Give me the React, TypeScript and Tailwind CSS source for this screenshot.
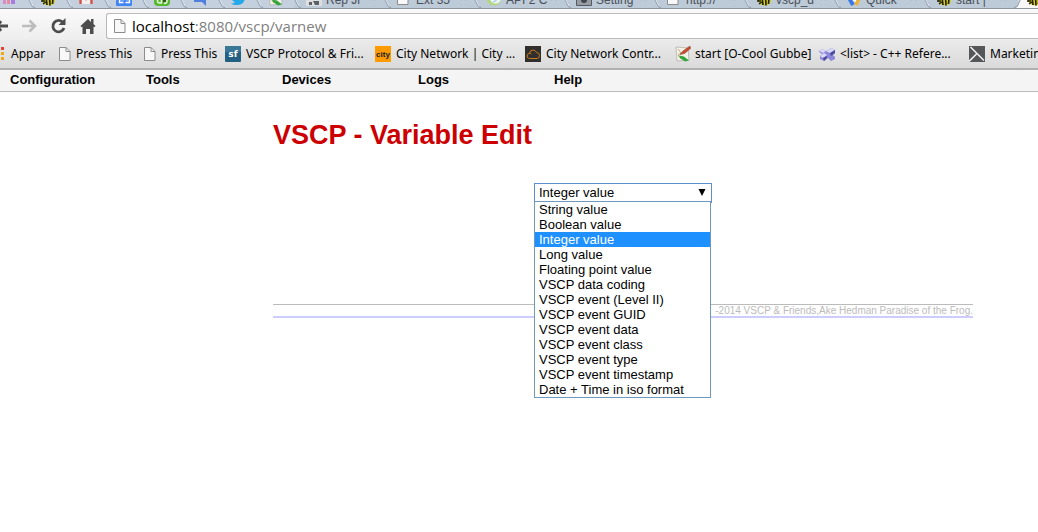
import React, { useState } from "react";

const Bee = () => (
  <svg width="16" height="16" viewBox="0 0 16 16" aria-hidden="true">
    <ellipse cx="6" cy="9" rx="4" ry="5" fill="#2a2710" />
    <ellipse cx="9" cy="11" rx="6" ry="4.5" fill="#d8d21c" />
    <path d="M6 7l1 8M9.500 6.500l.5 9M13 8l-.5 6" stroke="#25230c" strokeWidth="1.700" />
    <path d="M1 11h4M3 14l3-2" stroke="#25230c" strokeWidth="1.500" />
  </svg>
);

const Page = () => (
  <svg width="14" height="16" viewBox="0 0 14 16" aria-hidden="true">
    <path d="M1.500 1.500h6.500l4 4v9h-10.500z" fill="#f8f8f8" stroke="#8c8c8c" />
    <path d="M8 1.500v4h4" fill="none" stroke="#8c8c8c" />
  </svg>
);

const Bars = () => (
  <svg width="14" height="16" viewBox="0 0 14 16" aria-hidden="true">
    <path d="M1 9h3v5h-3z" fill="#d98ac8" />
    <path d="M5 8h3v6h-3z" fill="#e58b9c" />
    <path d="M9 7h4v7h-4z" fill="#a77be0" />
  </svg>
);

const Mail = () => (
  <svg width="16" height="16" viewBox="0 0 16 16" aria-hidden="true">
    <path d="M1 2h14v12h-14z" fill="#f5eeee" />
    <path d="M2.500 14v-11l5.500 6 5.500-6v11" fill="none" stroke="#d0534b" strokeWidth="2.500" />
  </svg>
);

const Calendar = () => (
  <svg width="16" height="16" viewBox="0 0 16 16" aria-hidden="true">
    <rect width="16" height="16" rx="1" fill="#4285f4" />
    <path d="M3.500 7h4v2.500h-4v3h4M9.500 7h4v5.500h-4M10 9.500h3" fill="none" stroke="#fff" strokeWidth="1.300" />
  </svg>
);

const Evernote = () => (
  <svg width="16" height="16" viewBox="0 0 16 16" aria-hidden="true">
    <rect width="16" height="16" rx="4" fill="#55b82d" />
    <path d="M3.500 7v4q0 2 2 2h2v-5M10 7h3v4q0 2.500-3 2.500" fill="none" stroke="#e5f5df" strokeWidth="1.500" />
    <path d="M9 9h3v3h-3z" fill="#34531f" />
  </svg>
);

const Bubble = () => (
  <svg width="16" height="16" viewBox="0 0 16 16" aria-hidden="true">
    <path d="M2 3h12v13l-4-4h-8z" fill="#4f7fe0" />
  </svg>
);

const Bird = () => (
  <svg width="16" height="16" viewBox="0 0 16 16" aria-hidden="true">
    <path d="M1 13.500q3 0 4-1.500-3-1-3-3h2q-3-2-2-5 3 3 6 3 0-4 3-4t3 1l2-.5-1 3q0 8.500-8 8.500-4 0-6-1.500z" fill="#23a8e8" />
  </svg>
);

const Wiki = () => (
  <svg width="16" height="16" viewBox="0 0 16 16" aria-hidden="true">
    <path d="M1 1l12 1 1 12-12 1z" fill="#f3f2e8" stroke="#a9aaa0" strokeWidth=".7" />
    <path d="M3 3l3 4-3 2 3 4" fill="none" stroke="#c5a97c" />
    <path d="M15 0l-7 5-3 3.500 4.500-1 6-5z" fill="#cf4c30" stroke="#773321" strokeWidth=".5" />
    <path d="M4 9.500l5 1 5 4-4 1-5-3.500z" fill="#32a63c" />
  </svg>
);

const Robot = () => (
  <svg width="16" height="16" viewBox="0 0 16 16" aria-hidden="true">
    <path d="M0 1h16v15h-16z" fill="#dedede" />
    <path d="M2 5h5v5h-5zM9 5h5v5h-5zM3 12h3v3h-3zM7 11h6v4h-4z" fill="#59606a" />
  </svg>
);

const Globe = () => (
  <svg width="16" height="16" viewBox="0 0 16 16" aria-hidden="true">
    <circle cx="8" cy="8" r="7.500" fill="#b3d77c" />
    <circle cx="9.500" cy="8" r="5.500" fill="#eef5fa" />
    <path d="M7 12q4-1 5-4" fill="none" stroke="#8bbbe0" />
  </svg>
);

const Gear = () => (
  <svg width="16" height="16" viewBox="0 0 16 16" aria-hidden="true">
    <path d="M.5.5h15v15h-15z" fill="#969da5" stroke="#555b62" />
    <circle cx="8" cy="10" r="3" fill="#41464c" />
  </svg>
);

const Quick = () => (
  <svg width="16" height="16" viewBox="0 0 16 16" aria-hidden="true">
    <path d="M2 6l5 9" stroke="#3b78e7" strokeWidth="4" />
    <path d="M10 15l3-7" stroke="#eeb33b" strokeWidth="4" />
    <path d="M7 10l3 1" stroke="#f4f6f8" strokeWidth="2" />
  </svg>
);

const SourceForge = () => (
  <svg width="16" height="16" viewBox="0 0 16 16" aria-hidden="true">
    <rect width="16" height="16" rx="1" fill="#246081" />
    <path d="M0 0h16v6h-16z" fill="#3a7796" />
    <text x="8" y="11" textAnchor="middle" fontFamily="DejaVu Sans, sans-serif" fontSize="9" fontWeight="bold" fill="#fff">sf</text>
  </svg>
);

const City = () => (
  <svg width="16" height="16" viewBox="0 0 16 16" aria-hidden="true">
    <path d="M0 0h16v16h-16z" fill="#ff9a00" />
    <text x="8" y="11" textAnchor="middle" fontFamily="Liberation Sans, sans-serif" fontSize="8" fontWeight="bold" fill="#17202a">city</text>
  </svg>
);

const Cloud = () => (
  <svg width="16" height="16" viewBox="0 0 16 16" aria-hidden="true">
    <path d="M0 0h16v16h-16z" fill="#302f2d" />
    <path d="M4.500 12.500q-2.500 0-2.500-2.500t2.500-2.500q.5-3.500 3.500-3.500 2.500 0 3.500 2.500 3 .3 3 3t-2.500 3zM4.500 7.500q1-.5 2 .5" fill="none" stroke="#c87a1e" />
  </svg>
);

const Cubes = () => (
  <svg width="16" height="16" viewBox="0 0 16 16" aria-hidden="true">
    <path d="M0 5l3-2 4 2 5-3 4 2v3l-2 2 2 2v2l-4 2-3-3-4 3-4-2v-3l2-2-3-2z" fill="#8c87d8" />
    <path d="M0 5l3-2 4 2-3 2zM7 5l5-3 4 2-5 3zM1 10l4-3 3 2-4 3z" fill="#d9d8f7" />
    <path d="M4 12l4-2v2l-3 3zM11 7l5-3v3l-4 3z" fill="#4d4a9c" />
  </svg>
);

const Tools = () => (
  <svg width="16" height="16" viewBox="0 0 16 16" aria-hidden="true">
    <path d="M0 0h16v16h-16z" fill="#555759" />
    <path d="M1.500 1l13.500 13.500M0 15.500l8-8" fill="none" stroke="#eeeeee" strokeWidth="1.600" />
  </svg>
);

const AppsGrid = () => (
  <svg width="4" height="14" viewBox="0 0 4 14" aria-hidden="true">
    <path d="M1 0h3v3h-3z" fill="#e74335" />
    <path d="M1 5h3v3h-3zM1 10h3v3h-3z" fill="#f2a815" />
  </svg>
);

const pinned = [
  { name: "Mail", icon: <Bee /> },
  { name: "Inbox", icon: <Mail /> },
  { name: "Calendar", icon: <Calendar /> },
  { name: "Notes", icon: <Evernote /> },
  { name: "Chat", icon: <Bubble /> },
  { name: "Feed", icon: <Bird /> },
  { name: "Wiki", icon: <Wiki /> },
];

const tabs = [
  { name: "Rep Jr", icon: <Robot /> },
  { name: "Ext 35", icon: <Page /> },
  { name: "API 2 C", icon: <Globe /> },
  { name: "Setting", icon: <Gear /> },
  { name: "http://", icon: <Page /> },
  { name: "vscp_d", icon: <Bee /> },
  { name: "Quick", icon: <Quick /> },
  { name: "start |", icon: <Bee /> },
];

const Slant = () => (
  <svg className="shrink-0 self-end" width="8" height="24" viewBox="0 0 8 24" aria-hidden="true">
    <path d="M0 14l4 8q1 1.500 3 1.500" fill="none" stroke="#8d99a6" />
    <path d="M1 14l4 8" fill="none" stroke="#dbe3ec" />
  </svg>
);

const bookmarks = [
  { name: "Press This", icon: <Page />, width: "w-[85px]", gap: "gap-1" },
  { name: "Press This", icon: <Page />, width: "w-[82px]", gap: "gap-1" },
  { name: "VSCP Protocol & Fri...", icon: <SourceForge />, width: "w-[150px]", gap: "gap-[5px]" },
  { name: "City Network | City ...", icon: <City />, width: "w-[150px]", gap: "gap-[5px]" },
  { name: "City Network Contr...", icon: <Cloud />, width: "w-[150px]", gap: "gap-[5px]" },
  { name: "start [O-Cool Gubbe]", icon: <Wiki />, width: "w-[144px]", gap: "gap-1" },
  { name: "<list> - C++ Refere...", icon: <Cubes />, width: "w-[150px]", gap: "gap-[5px]" },
  { name: "Marketin", icon: <Tools />, width: "w-[150px]", gap: "gap-[5px]" },
];

const menu = ["Configuration", "Tools", "Devices", "Logs", "Help"];

const types = [
  "String value",
  "Boolean value",
  "Integer value",
  "Long value",
  "Floating point value",
  "VSCP data coding",
  "VSCP event (Level II)",
  "VSCP event GUID",
  "VSCP event data",
  "VSCP event class",
  "VSCP event type",
  "VSCP event timestamp",
  "Date + Time in iso format",
];

function TabStrip() {
  return (
    <div className="flex h-[9px] items-end overflow-hidden border-b border-[#8f959c] bg-[#c4d0dd]">
      <button aria-label="Stats" className="flex h-6 w-7 shrink-0 items-center pt-1 pl-[2px]">
        <Bars />
      </button>
      {pinned.map((t) => (
        <button key={t.name} aria-label={t.name} className="flex h-6 w-[38px] shrink-0 items-center gap-1 pt-1">
          <Slant />
          {t.icon}
        </button>
      ))}
      {tabs.map((t) => (
        <button key={t.name} className="flex h-6 w-[90px] shrink-0 items-center gap-1 bg-[#bdcad8] pt-1 text-xs text-[#4a5057]">
          <Slant />
          <span className="flex w-4 shrink-0">{t.icon}</span>
          <span className="w-10 pt-1 text-left whitespace-nowrap">{t.name}</span>
          <span className="text-[#8d97a2]">×</span>
        </button>
      ))}
      <button aria-label="Variable Edit" className="flex h-6 grow items-center bg-[#f8f8f8] pt-1">
        <svg className="shrink-0 self-end" width="8" height="24" viewBox="0 0 8 24" aria-hidden="true">
          <path d="M0 0h7l-3 22q-1 2-4 2z" fill="#bdcad8" />
          <path d="M7 14l-3 7q-1 2.500-4 2.500" fill="none" stroke="#8d99a6" />
        </svg>
        <span className="pl-1">
          <Bee />
        </span>
      </button>
    </div>
  );
}

function Toolbar() {
  return (
    <div className="flex h-[31px] items-center bg-linear-to-b from-[#fafafa] to-[#eeeeee] pt-[2px]">
      <button aria-label="Back" className="w-5 shrink-0">
        <svg width="8" height="16" viewBox="0 0 8 16" aria-hidden="true">
          <path d="M0 8h8" stroke="#4d4d4d" strokeWidth="3" />
          <path d="M1 3l-4 5 4 5" fill="none" stroke="#4d4d4d" strokeWidth="3" />
        </svg>
      </button>
      <button aria-label="Forward" className="w-[30px] shrink-0">
        <svg width="18" height="16" viewBox="0 0 18 16" aria-hidden="true">
          <path d="M2 8h13M9.500 2.500l5.500 5.500-5.500 5.500" fill="none" stroke="#bdbdbd" strokeWidth="2.500" />
        </svg>
      </button>
      <button aria-label="Reload" className="w-[30px] shrink-0">
        <svg width="17" height="16" viewBox="0 0 17 16" aria-hidden="true">
          <path d="M13 4.500a5.700 5.700 0 1 0 1 5.500" fill="none" stroke="#4d4d4d" strokeWidth="2.800" />
          <path d="M15.500 0v7h-7z" fill="#4d4d4d" />
        </svg>
      </button>
      <button aria-label="Home" className="w-[26px] shrink-0">
        <svg width="16" height="16" viewBox="0 0 16 16" aria-hidden="true">
          <path d="M8 1l3 3v-3h2.500v5l2 2-1.200 1.200-.8-.7v7.500h-3.500v-5h-4v5h-3.500v-7.500l-.8.7-1.200-1.200z" fill="#4d4d4d" />
        </svg>
      </button>
      <div className="flex h-[26px] grow items-center gap-[5px] rounded-l-[3px] border border-r-0 border-[#b9b9b9] bg-white pl-[6px]">
        <Page />
        <button
          aria-label="Address"
          className="h-6 grow text-left font-['Open_Sans','Noto_Sans',sans-serif] text-[15px] leading-6 text-[#808080]"
        >
          <span className="text-black">localhost</span>:8080/vscp/varnew
        </button>
      </div>
    </div>
  );
}

export default function App() {
  const [value, setValue] = useState("Integer value");
  return (
    <div className="min-h-screen overflow-hidden bg-white font-['Liberation_Sans',Arial,sans-serif] text-[13px] text-black">
      <header>
        <TabStrip />
        <Toolbar />
        <nav
          aria-label="Bookmarks"
          className="flex h-[30px] items-center overflow-hidden border-b-2 border-[#b0b0b0] bg-linear-to-b from-[#eaeaea] to-[#dadada] font-['Noto_Sans','Open_Sans',sans-serif] text-xs"
        >
          <a href="#apps" className="flex w-[58px] shrink-0 items-center gap-[7px]">
            <AppsGrid />
            Appar
          </a>
          {bookmarks.map((b, i) => (
            <a key={i} href="#bookmark" className={`flex shrink-0 items-center whitespace-nowrap ${b.width} ${b.gap}`}>
              <span className="shrink-0">{b.icon}</span>
              {b.name}
            </a>
          ))}
        </nav>
      </header>

      <nav aria-label="Main" className="flex h-[22px] border-b border-[#bbbbbb] bg-[#f4f4f4] pl-[10px] font-bold leading-5">
        {menu.map((m) => (
          <a key={m} href="#menu" className="w-[136px]">
            {m}
          </a>
        ))}
      </nav>

      <main className="ml-[273px] max-w-[700px] pt-[27px]">
        <h1 className="text-[27px] leading-8 font-bold text-[#cc0000]">VSCP - Variable Edit</h1>

        <div className="relative mt-8 ml-[261px] w-[178px]">
          <select
            aria-label="Variable type"
            value={value}
            onChange={(e) => setValue(e.target.value)}
            className="block h-5 w-full appearance-none border border-[#5b8fd0] bg-white pl-1 text-[13px] leading-4 outline-none"
          >
            {types.map((t) => (
              <option key={t}>{t}</option>
            ))}
          </select>
          <svg className="pointer-events-none absolute top-[6px] right-[6px]" width="8" height="7" viewBox="0 0 8 7" aria-hidden="true">
            <path d="M.5 0h7l-3.500 7z" fill="#000" />
          </svg>
          <ul role="listbox" aria-label="Variable types" className="absolute top-[18px] left-0 w-[177px] border border-[#7099c0] bg-white leading-[15px]">
            {types.map((t) => (
              <li
                key={t}
                role="option"
                aria-selected={t === value}
                onClick={() => setValue(t)}
                className={t === value ? "bg-[#1e90ff] pl-1 text-white" : "pl-1"}
              >
                {t}
              </li>
            ))}
          </ul>
        </div>

        <footer className="mt-[101px] border-t border-b-2 border-t-[#bbbbbb] border-b-[#ccccff] text-right text-[10px] leading-[11px] text-[#bbbbbb]">
          -2014 VSCP &amp; Friends,Ake Hedman Paradise of the Frog.
        </footer>
      </main>
    </div>
  );
}
